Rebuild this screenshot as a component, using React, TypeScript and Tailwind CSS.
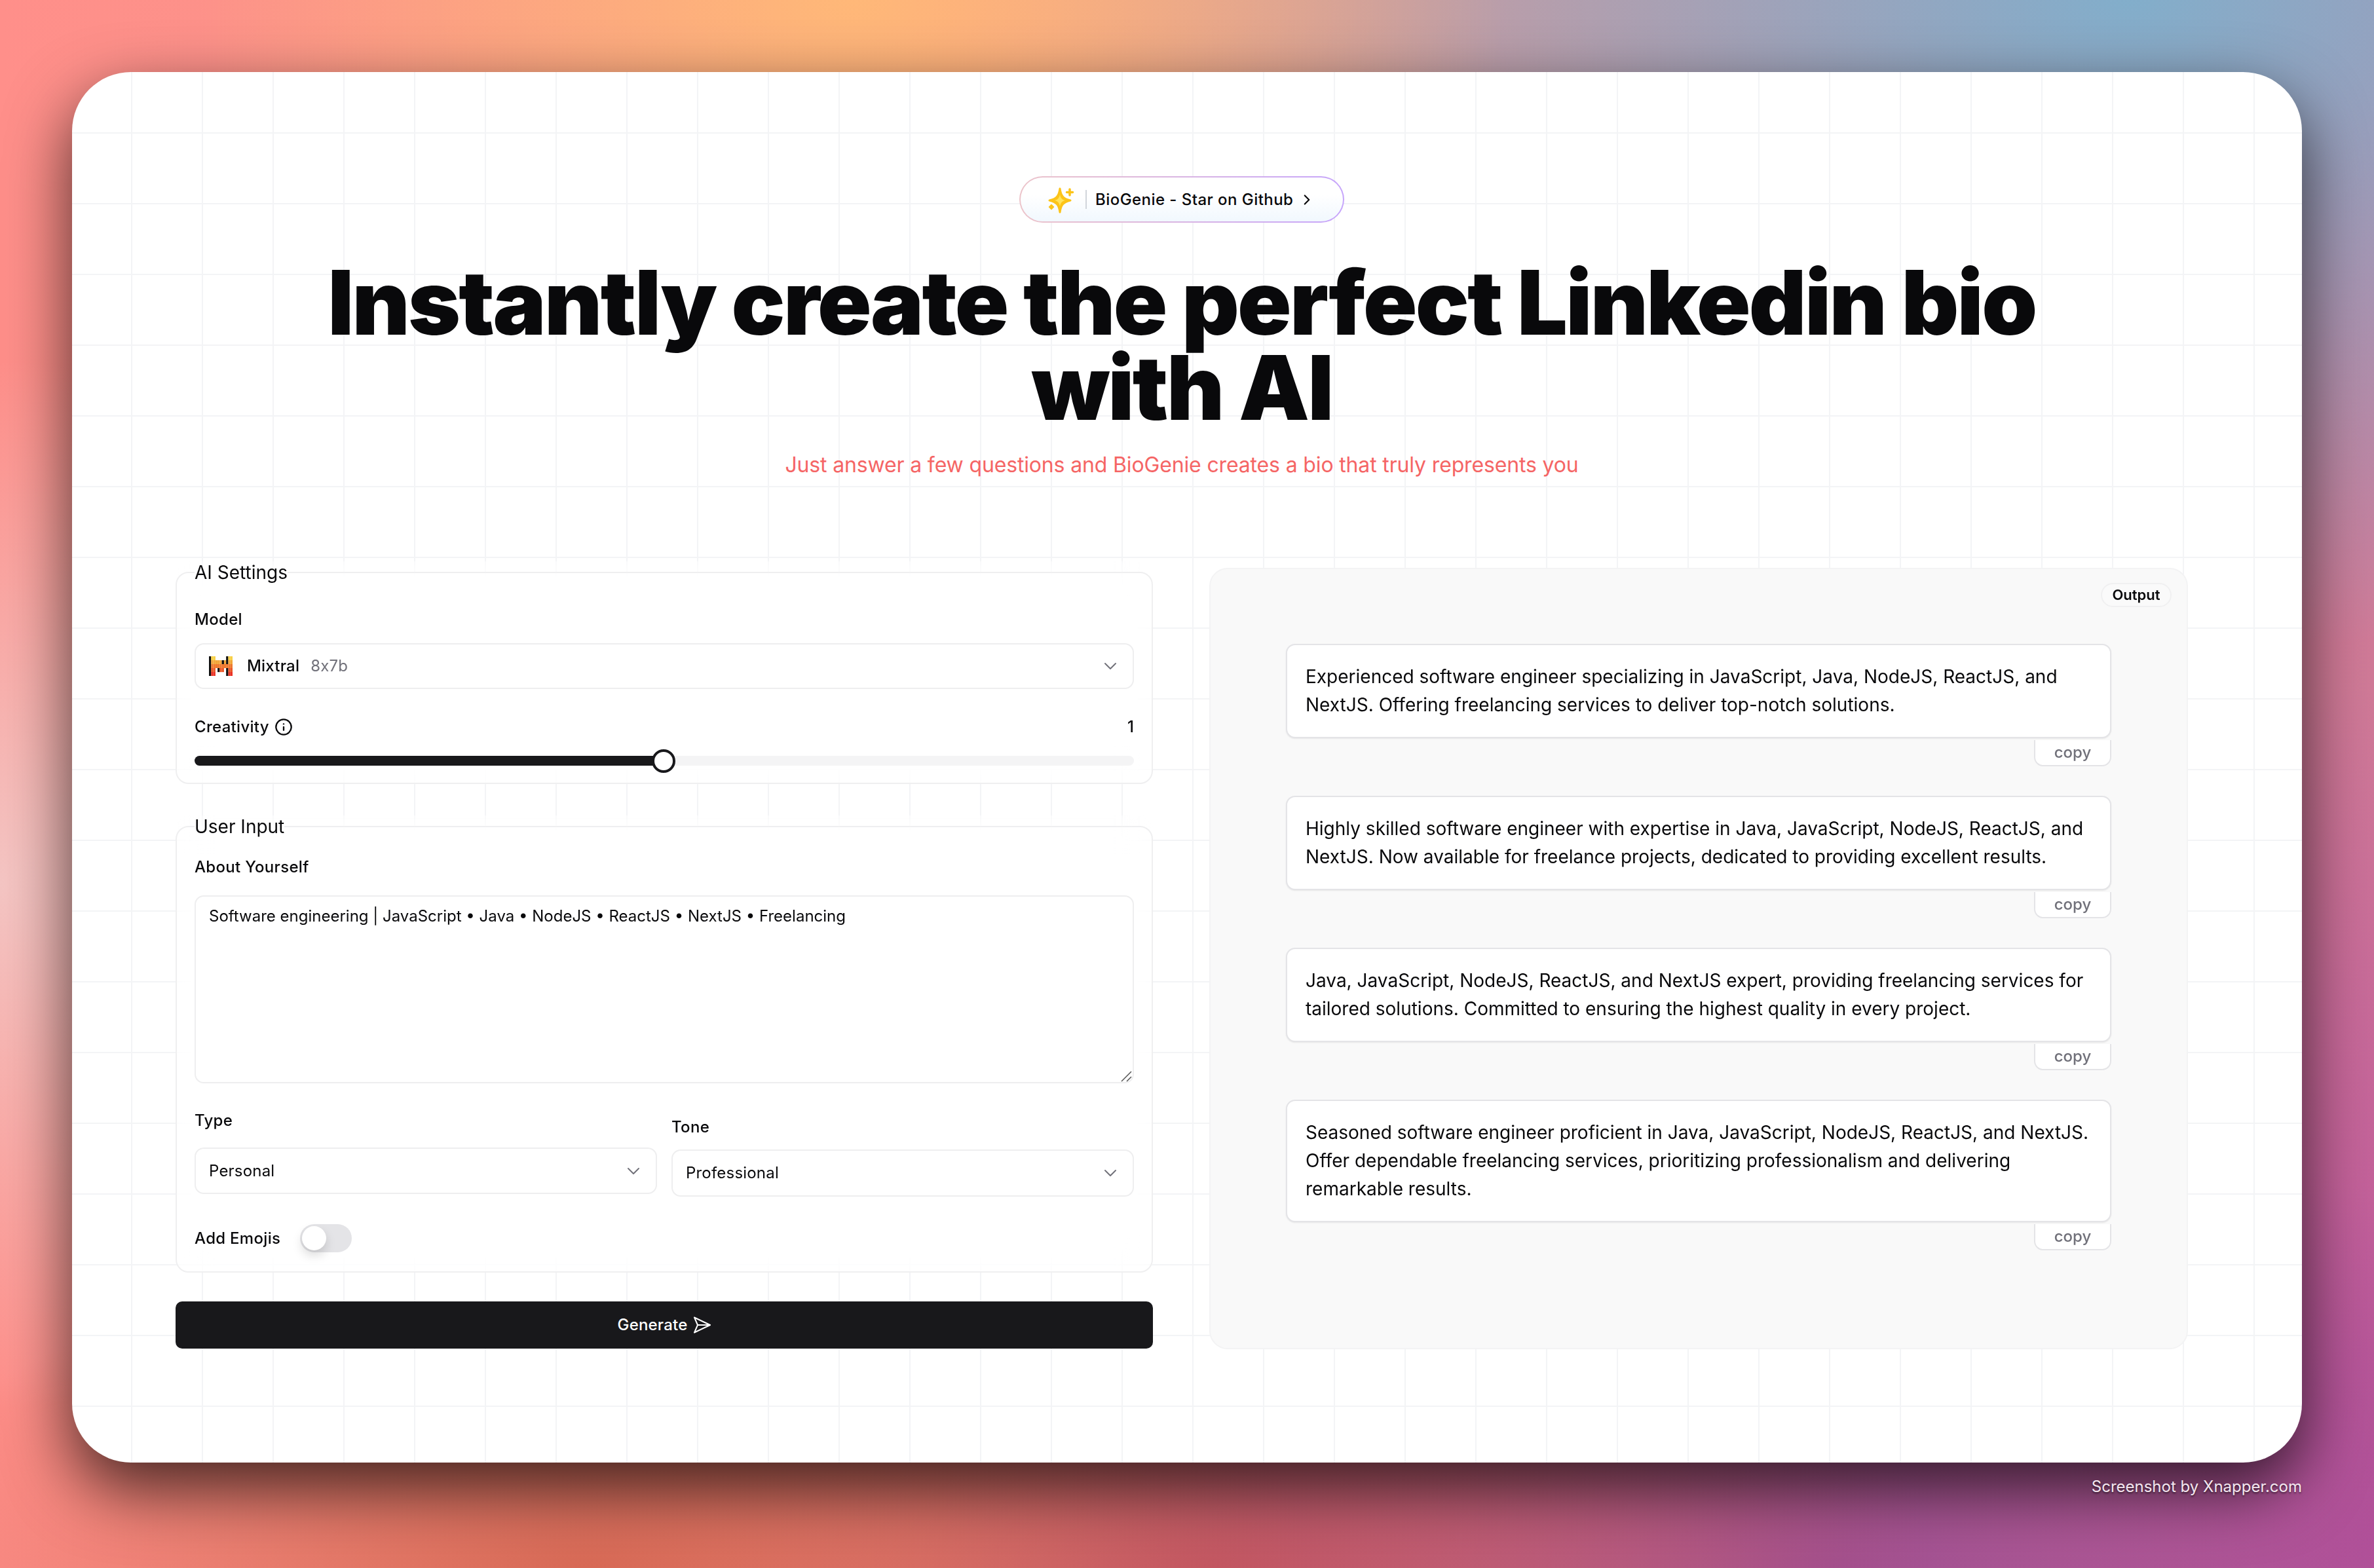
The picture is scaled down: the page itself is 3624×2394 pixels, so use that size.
import { ChevronDown, ChevronRight, Info } from "lucide-react";

const font = "[font-family:Inter,'Noto_Sans',sans-serif]";

function Sparkle() {
  return (
    <svg width="42" height="42" viewBox="0 0 42 42" className="shrink-0">
      <path d="M18 4 C19.5 15 23 19.5 34 22 C23 24.5 19.5 29 18 40 C16.5 29 13 24.5 2 22 C13 19.5 16.5 15 18 4 Z" fill="#fcc419" stroke="#fcc419" strokeWidth="3" strokeLinejoin="round" />
      <path d="M18 13 C19 18 21 21 26 22 C21 23 19 26 18 31 C17 26 15 23 10 22 C15 21 17 18 18 13 Z" fill="#ffe45c" />
      <path d="M33 5 v9 M28.500 9.500 h9" stroke="#fcc419" strokeWidth="3.500" strokeLinecap="round" />
      <path d="M5 28.500 l3.500 3.500 -3.500 3.500 -3.500 -3.500 Z" fill="#fcc419" stroke="#fcc419" strokeWidth="1.500" strokeLinejoin="round" />
    </svg>
  );
}

const k = "#111111";
const y = "#f7d046";
const l = "#f2a73b";
const o = "#ee792f";
const d = "#eb5829";
const r = "#ea3326";
const logoRows: (string | null)[][] = [
  [k, y, y, null, null, null, null, null, k, y, y],
  [k, l, l, l, l, l, k, l, k, l, l],
  [k, o, o, o, o, o, o, o, o, o, o],
  [k, d, d, null, k, d, d, null, k, d, d],
  [k, r, r, null, null, null, null, null, k, r, r],
];

function MistralLogo() {
  return (
    <svg width="36" height="30" viewBox="0 0 11 5" preserveAspectRatio="none" className="shrink-0">
      {logoRows.map((row, ri) =>
        row.map((c, ci) => (c ? <rect key={`${ri}-${ci}`} x={ci} y={ri} width="1.02" height="1.02" fill={c} /> : null))
      )}
    </svg>
  );
}

function Label({ children }: { children: React.ReactNode }) {
  return <div className="text-[24px] leading-[36px] font-medium tracking-[0.3px] text-[#09090b]">{children}</div>;
}

function Select({ children, height }: { children: React.ReactNode; height: string }) {
  return (
    <div className={`flex items-center justify-between rounded-[14px] border-2 border-[#eeeeef] bg-white pl-[20px] pr-[18px] ${height}`}>
      <div className="flex items-center text-[24px] tracking-[0.2px] text-[#09090b]">{children}</div>
      <ChevronDown size={32} strokeWidth={1.5} className="text-[#71717a]" />
    </div>
  );
}

function Bio({ text }: { text: string }) {
  return (
    <div className="flex flex-col items-end">
      <div className="w-full rounded-[14px] border-2 border-[#e4e4e7] bg-white px-[28px] py-[27px] text-[28px] leading-[43px] text-[#09090b] shadow-[0_1px_2px_rgba(0,0,0,0.08)]">
        {text}
      </div>
      <div className="mt-[3px] flex h-[40px] w-[118px] items-center justify-center rounded-b-[14px] border-x-2 border-b-2 border-[#e4e4e7] bg-white text-[24px] font-medium text-[#71717a]">
        copy
      </div>
    </div>
  );
}

export default function App() {
  return (
    <div
      className={`h-[2394px] w-[3624px] overflow-hidden px-[110px] pt-[110px] ${font} bg-[radial-gradient(ellipse_1000px_600px_at_1300px_0px,#ffb878_0%,rgba(255,184,120,0)_100%),radial-gradient(ellipse_1800px_1000px_at_3250px_0px,#82aecb_0%,rgba(130,174,203,0)_100%),radial-gradient(ellipse_700px_800px_at_0px_1350px,#f5c6c4_0%,rgba(245,198,196,0)_100%),radial-gradient(ellipse_1100px_500px_at_900px_2394px,#d86a56_0%,rgba(216,106,86,0)_100%),radial-gradient(ellipse_1100px_500px_at_1850px_2394px,#c05463_0%,rgba(192,84,99,0)_100%),radial-gradient(ellipse_1400px_700px_at_2800px_2394px,#a04f93_0%,rgba(160,79,147,0)_100%),radial-gradient(ellipse_1000px_1300px_at_3624px_2350px,#bb509c_0%,rgba(187,80,156,0)_100%),linear-gradient(90deg,#ff8f8a_0%,#f59a88_45%,#d07a98_100%)]`}
    >
      <div className="h-[2123px] w-full overflow-hidden rounded-[90px] bg-white bg-[linear-gradient(#f3f4f6_2px,transparent_2px),linear-gradient(90deg,#f3f4f6_2px,transparent_2px)] bg-[size:108px_108px] bg-[position:90px_92px] pl-[158px] pr-[174px] pt-[159px] shadow-[0_40px_100px_rgba(0,0,0,0.7)]">
        <div className="flex flex-col items-center">
          <div className="rounded-full bg-[linear-gradient(90deg,#ecc4ca,#c6a5fb)] p-[2px]">
            <div className="flex h-[67px] w-[492px] items-center rounded-full bg-[linear-gradient(180deg,#ffffff_40%,#f1f8fe_100%)] pl-[42px]">
              <Sparkle />
              <div className="ml-[15px] h-[29px] w-[2px] bg-[#d1d5db]" />
              <span className="ml-[13px] whitespace-nowrap text-[24px] font-medium tracking-[0.45px] text-[#09090b]">BioGenie - Star on Github</span>
              <ChevronRight size={26} strokeWidth={2} className="ml-[8px] text-[#09090b]" />
            </div>
          </div>
          <h1 className="mt-[57px] w-[2700px] text-center text-[136px] font-black leading-[130px] tracking-[-2.7px] text-[#09090b]">
            Instantly create the perfect Linkedin bio with AI
          </h1>
          <p className="mt-[29px] text-[32px] leading-[48px] tracking-[-0.15px] text-[#f56565]">
            Just answer a few questions and BioGenie creates a bio that truly represents you
          </p>
        </div>

        <div className="mt-[123px] grid grid-cols-[1492px_1494px] gap-x-[86px]">
          <div className="flex flex-col">
            <fieldset className="rounded-[20px] border-2 border-[#efeff0] bg-white/60 px-[27px] pb-[26px] pt-[37px] backdrop-blur-xl">
              <legend className="text-[28px] leading-[34px] text-[#09090b]">AI Settings</legend>
              <Label>Model</Label>
              <div className="mt-[18px]">
                <Select height="h-[70px]">
                  <MistralLogo />
                  <span className="ml-[22px] font-medium">Mixtral</span>
                  <span className="ml-[17px] text-[#71717a] [font-feature-settings:'calt'_0]">8x7b</span>
                </Select>
              </div>
              <div className="mt-[40px] flex items-center justify-between">
                <div className="flex items-center">
                  <Label>Creativity</Label>
                  <Info size={28} strokeWidth={2} className="ml-[8px] text-[#09090b]" />
                </div>
                <span className="text-[24px] leading-[36px] font-medium text-[#09090b]">1</span>
              </div>
              <div className="relative mt-[26px] h-[15px] w-full rounded-full bg-[#f4f4f5]">
                <div className="h-full w-[716px] rounded-full bg-[#18181b]" />
                <div className="absolute left-[698px] top-[-10px] h-[36px] w-[36px] rounded-full border-[4px] border-[#18181b] bg-white" />
              </div>
            </fieldset>

            <fieldset className="mt-[48px] rounded-[20px] border-2 border-[#efeff0] bg-white/60 px-[27px] pb-[29px] pt-[27px] backdrop-blur-xl">
              <legend className="text-[28px] leading-[34px] text-[#09090b]">User Input</legend>
              <Label>About Yourself</Label>
              <div className="relative mt-[25px]">
                <textarea
                  readOnly
                  defaultValue="Software engineering | JavaScript • Java • NodeJS • ReactJS • NextJS • Freelancing"
                  className="block h-[287px] w-full resize-none rounded-[14px] border-2 border-[#eeeeef] bg-white px-[20px] py-[12px] text-[24px] leading-[36px] text-[#09090b] outline-none"
                />
                <svg width="18" height="18" viewBox="0 0 18 18" className="absolute bottom-[1px] right-[2px]">
                  <path d="M1 16 L16 1 M9 16 L16 9" stroke="#555555" strokeWidth="1.500" fill="none" />
                </svg>
              </div>
              <div className="mt-[39px] grid grid-cols-2 gap-x-[22px]">
                <div>
                  <Label>Type</Label>
                  <div className="mt-[23px]">
                    <Select height="h-[71px]">Personal</Select>
                  </div>
                </div>
                <div className="pt-[10px]">
                  <Label>Tone</Label>
                  <div className="mt-[16px]">
                    <Select height="h-[72px]">Professional</Select>
                  </div>
                </div>
              </div>
              <div className="mt-[42px] flex items-center">
                <Label>Add Emojis</Label>
                <div className="ml-[30px] h-[43px] w-[79px] rounded-full bg-[#e4e4e7] p-[3px]">
                  <div className="h-[37px] w-[37px] rounded-full bg-white shadow-[0_8px_16px_rgba(0,0,0,0.15)]" />
                </div>
              </div>
            </fieldset>

            <button className="mt-[44px] flex h-[72px] w-full items-center justify-center rounded-[10px] bg-[#18181b] text-[24px] font-medium tracking-[0.2px] text-white">
              Generate
              <svg width="28" height="28" viewBox="0 0 28 28" className="ml-[8px]" fill="none" stroke="#ffffff" strokeWidth="2" strokeLinejoin="round">
                <path d="M2 2.500 L26 14 L2 25.500 L7 14 Z M7 14 H26" />
              </svg>
            </button>
          </div>

          <div className="relative mt-[10px] h-[1193px] rounded-[28px] border-2 border-[#f3f3f4] bg-[#f8f8f8]/90 px-[115px] pt-[114px] backdrop-blur-xl">
            <div className="absolute right-[23px] top-[21px] flex h-[37px] w-[108px] items-center justify-center rounded-full border-2 border-[#f0f0f1] bg-[#fafafa] text-[22px] font-semibold text-[#09090b]">
              Output
            </div>
            <div className="flex flex-col gap-[45px]">
              <Bio text="Experienced software engineer specializing in JavaScript, Java, NodeJS, ReactJS, and NextJS. Offering freelancing services to deliver top-notch solutions." />
              <Bio text="Highly skilled software engineer with expertise in Java, JavaScript, NodeJS, ReactJS, and NextJS. Now available for freelance projects, dedicated to providing excellent results." />
              <Bio text="Java, JavaScript, NodeJS, ReactJS, and NextJS expert, providing freelancing services for tailored solutions. Committed to ensuring the highest quality in every project." />
              <Bio text="Seasoned software engineer proficient in Java, JavaScript, NodeJS, ReactJS, and NextJS. Offer dependable freelancing services, prioritizing professionalism and delivering remarkable results." />
            </div>
          </div>
        </div>
      </div>
      <div className="mt-[20px] text-right text-[24px] leading-[34px] text-[#f4e6f0] [text-shadow:0_2px_3px_rgba(0,0,0,0.55)]">
        Screenshot by Xnapper.com
      </div>
    </div>
  );
}
